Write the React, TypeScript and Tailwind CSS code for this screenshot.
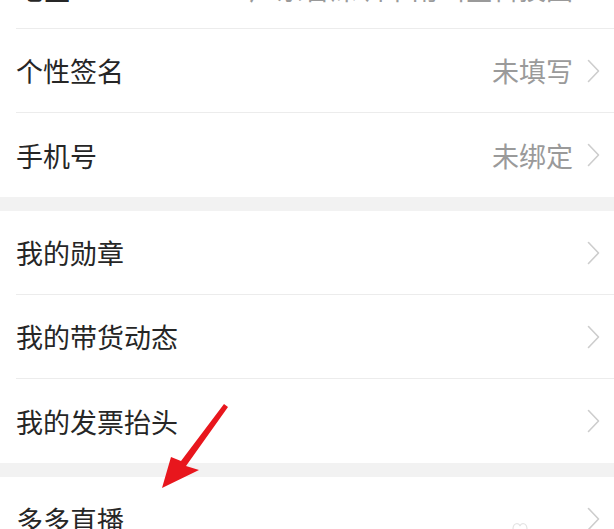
import React from "react";

type Row = { label: string; value?: string };

const groups: Row[][] = [
  [
    { label: "地区", value: "广东省深圳市南山区科技园" },
    { label: "个性签名", value: "未填写" },
    { label: "手机号", value: "未绑定" },
  ],
  [{ label: "我的勋章" }, { label: "我的带货动态" }, { label: "我的发票抬头" }],
  [{ label: "多多直播" }],
];

function Chevron() {
  return (
    <svg width="13" height="24" viewBox="0 0 13 24" fill="none" className="shrink-0">
      <path d="M1.5 1.5L11.5 12L1.5 22.5" stroke="#cdcdcd" strokeWidth="1.6" strokeLinecap="round" strokeLinejoin="round" />
    </svg>
  );
}

function SettingRow({ row, last, first }: { row: Row; last: boolean; first: boolean }) {
  return (
    <div className="pl-4 bg-white">
      <div
        className={`h-[84px] flex items-center pr-[14px] ${last ? "" : "border-b border-[#ececec]"}`}
      >
        <div className={`flex-1 flex items-center whitespace-nowrap ${first ? "mt-[4px]" : ""}`}>
          <span className="flex-1 text-[27px] leading-none text-[#262626]">{row.label}</span>
          {row.value && (
            <span className="text-[27px] leading-none text-[#9a9a9a] mr-[14px]">{row.value}</span>
          )}
        </div>
        <Chevron />
      </div>
    </div>
  );
}

export default function App() {
  return (
    <div
      className="w-[614px] h-[529px] overflow-hidden bg-white relative"
      style={{ fontFamily: '"Noto Sans CJK SC", "Noto Sans", sans-serif' }}
    >
      <div className="-mt-[55px]">
        {groups.map((g, gi) => (
          <div key={gi} className={gi > 0 ? "border-t-[14px] border-[#f2f2f2]" : ""}>
            {g.map((r, i) => (
              <SettingRow key={r.label} row={r} first={gi === 0 && i === 0} last={i === g.length - 1} />
            ))}
          </div>
        ))}
      </div>

      {/* red annotation arrow */}
      <svg className="absolute left-0 top-0 pointer-events-none" width="614" height="529">
        <path d="M224 404 L228 407 L186 466 L199 470 L162 488 L171 457 L181 461 Z" fill="#e8161d" />
      </svg>
      <svg className="absolute left-[510px] top-[519px]" width="20" height="12">
        <path d="M3 10 C3 4 9 3 10 7 C11 3 17 4 17 10" stroke="#e4e4e4" strokeWidth="1.2" fill="none" />
      </svg>
    </div>
  );
}
